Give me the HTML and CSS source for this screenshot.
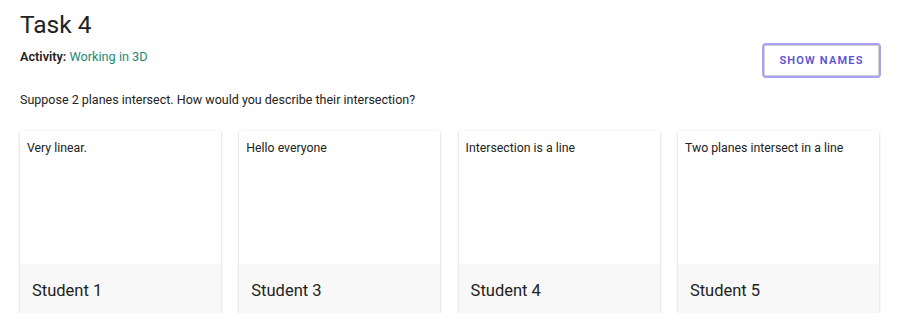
FILE: index.html
```html
<!DOCTYPE html>
<html lang="en">
<head>
    <meta charset="UTF-8">
    <meta name="viewport" content="width=device-width, initial-scale=1.0">
    <title>Task 4</title>
    <link rel="stylesheet" href="styles.css">
</head>
<body>
    <div class="container">
        <h1 class="title">Task 4</h1>
        <div class="top-row">
            <p class="activity"><strong>Activity:</strong> <span class="activity-name">Working in 3D</span></p>
            <button class="names-btn">SHOW NAMES</button>
        </div>
        <p class="question">Suppose 2 planes intersect. How would you describe their intersection?</p>
        <div class="cards">
            <div class="card">
                <div class="card-body">Very linear.</div>
                <div class="card-footer">Student 1</div>
            </div>
            <div class="card">
                <div class="card-body">Hello everyone</div>
                <div class="card-footer">Student 3</div>
            </div>
            <div class="card">
                <div class="card-body">Intersection is a line</div>
                <div class="card-footer">Student 4</div>
            </div>
            <div class="card">
                <div class="card-body">Two planes intersect in a line</div>
                <div class="card-footer">Student 5</div>
            </div>
        </div>
    </div>
</body>
</html>
```

FILE: styles.css
```css
body {
    font-family: Roboto, "Helvetica Neue", Arial, sans-serif;
    margin: 0;
    padding: 0;
    color: #222;
    background: #fff;
}
.container {
    padding: 9px 20px 0 20px;
}
.title {
    font-size: 24.5px;
    font-weight: 400;
    margin: 0;
    line-height: 32px;
}
.top-row {
    display: flex;
    justify-content: space-between;
    align-items: flex-start;
    margin-top: 4px;
}
.activity {
    font-size: 12.7px;
    margin: 4px 0 0 0;
}
.activity strong {
    font-weight: 600;
}
.activity-name {
    color: #1a8a78;
}
.names-btn {
    margin-top: 0;
    margin-right: 1px;
    width: 115px;
    height: 31px;
    background: #fff;
    border: 1px solid #cfcfcf;
    outline: 2px solid #a9a2f4;
    outline-offset: 0;
    border-radius: 2px;
    color: #5b50d8;
    font-family: Roboto, Arial, sans-serif;
    font-size: 11px;
    font-weight: 600;
    letter-spacing: 1.2px;
    cursor: pointer;
}
.question {
    font-size: 12.5px;
    margin: 16px 0 0 0;
}
.cards {
    display: grid;
    grid-template-columns: repeat(4, 201px);
    column-gap: 18.3px;
    margin-top: 24px;
}
.card {
    background: #fff;
    height: 182px;
    display: flex;
    flex-direction: column;
    box-shadow: 0 1px 3px rgba(0, 0, 0, 0.22), 0 1px 1px rgba(0, 0, 0, 0.08);
    border-radius: 2px;
}
.card-body {
    flex: 1;
    font-size: 12.3px;
    padding: 10px 7px 8px 7px;
}
.card-footer {
    height: 49px;
    background: #f8f8f8;
    font-size: 16.5px;
    padding: 3px 12px 0 12px;
    box-sizing: border-box;
    display: flex;
    align-items: center;
}
```
